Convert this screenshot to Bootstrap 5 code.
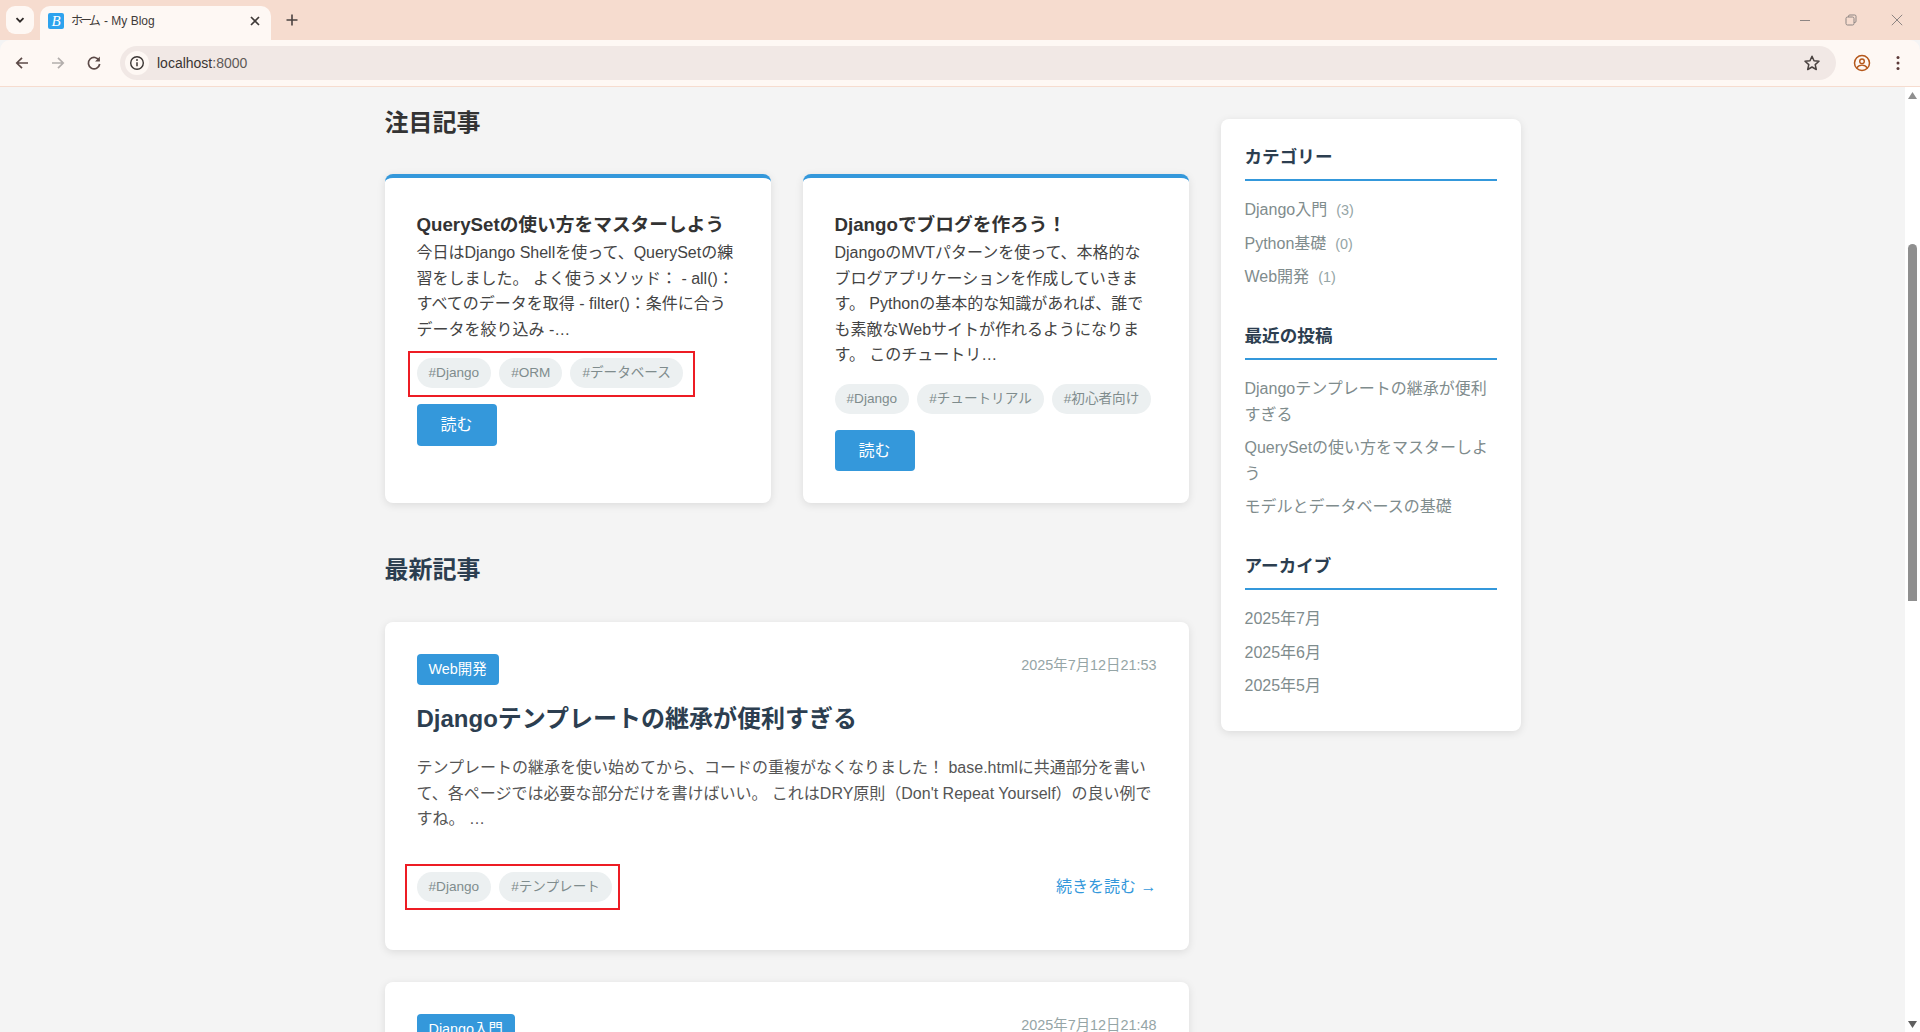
<!DOCTYPE html>
<html lang="ja">
<head>
<meta charset="utf-8">
<title>ホーム - My Blog</title>
<link rel="stylesheet" href="https://cdn.jsdelivr.net/npm/bootstrap@5.3.0/dist/css/bootstrap.min.css">
<style>
html,body{height:100%}
body{font-family:"Liberation Sans","Noto Sans CJK JP",sans-serif;background:#f4f4f4;color:#333;line-height:1.6;font-size:16px}
/* browser chrome */
.tabstrip{height:40px;background:#f6dccf;padding-left:6px}
.tabs-btn{width:28px;height:28px;margin-top:6px;background:#fef8f4;border-radius:9px}
.tab-active{width:231px;height:34px;margin:6px 0 0 6px;background:#fef8f4;border-radius:10px 10px 0 0;padding:0 10px 4px 8px;font-size:12px;color:#3f3a38;line-height:1}
.tab-kana{letter-spacing:-3px;margin-right:3px}
.favi{width:16px;height:16px;background:#2ea3ee;border-radius:2px;color:#fff;font:italic 400 15px/16px "Liberation Serif",serif;text-align:center;margin-right:7px;flex:none}
.tab-new{margin:8px 0 0 9px;width:24px;height:24px}
.winbtns{margin-left:auto}
.winbtn{width:46px;height:40px}
.toolbar{height:47px;background:#fef8f4;border-bottom:1px solid #f6dccf;border-radius:10px 10px 0 0;padding:0 0 1px 0}
.navic{width:36px;height:36px;flex:none}
.omni{width:1716px;height:34px;margin-left:8px;background:#f1e8e5;border-radius:17px;padding:1px 5px 0;font-size:14px;color:#3a3533}
.omni-info{width:24px;height:24px;background:#fef8f4;border-radius:50%;margin-right:8px;flex:none}
.port{color:#5f5a58}
.star-ic{margin-left:auto;margin-right:10px}
.prof-ic{margin-left:8px}
/* page */
.viewport{height:945px}
.pagearea{min-width:0}
.shell{max-width:1200px;margin:0 auto;padding:16px 32px 0;gap:32px}
.mainc{width:804px;flex:none;padding-top:.6px}
.side-col{width:300px;flex:none;padding-top:16px}
.sect-ttl{font-size:24px;line-height:38.4px;font-weight:700;color:#2c3e50;margin:0 0 32px}
.sect-feat{color:#333}
.feat-row{--bs-gutter-x:2rem;--bs-gutter-y:0;margin-bottom:48px}
.panel{background:#fff;border:0;border-radius:8px;box-shadow:0 2px 8px rgba(0,0,0,.1)}
.feat{border-top:4px solid #3498db;padding:32px;height:100%}
.feat-ttl{font-size:18.72px;line-height:1.6;font-weight:700;color:#333;margin:0}
.feat-txt{margin:0;color:#444}
.tagrow{margin:16px 0;gap:8px;position:relative;width:max-content}
.tagpill{background:#ecf0f1;color:#7f8c8d;font-size:13.6px;line-height:21.76px;padding:4px 12px;border-radius:20px}
.redbox{position:absolute;border:2px solid #ed1c24;pointer-events:none}
.redbox-a{left:-9px;right:-12px;top:-7px;bottom:-9px}
.redbox-b{left:-12px;right:-8px;top:-8px;bottom:-8px}
.readbtn{background:#3498db;border:0;color:#fff;font-size:16px;line-height:25.6px;padding:8px 24px;border-radius:4px}
.post{padding:32px;margin-bottom:32px}
.catbadge{background:#3498db;color:#fff;font-size:14.4px;line-height:23px;padding:4px 12px;border-radius:4px}
.datetxt{font-size:14.4px;line-height:23px;color:#95a5a6}
.post-ttl{font-size:24px;line-height:38.4px;font-weight:700;color:#2c3e50;margin:15px 0 17px}
.post-txt{color:#555;margin:0 0 24px}
.morelink{color:#3498db;text-decoration:none}
.sidepanel{padding:24px}
.wdg{margin-bottom:24px}
.wdg:last-child{margin-bottom:0}
.wdg-ttl{font-size:17.6px;line-height:28.16px;font-weight:700;color:#2c3e50;margin:0 0 16px;padding-bottom:8px;border-bottom:2px solid #3498db}
.wdg-list li{margin-bottom:8px}
.wdg-list a{color:#7f8c8d;text-decoration:none}
.cnt{color:#95a5a6;font-size:14.4px;margin-left:9px}
/* scrollbar */
.sbar{width:15px;flex:none;background:#fff;padding:5px 3px 4px}
.sarrow{width:9px;height:7px;flex:none}
.sthumb{width:9px;height:357px;margin-top:145px;background:#8f8f8f;border-radius:5px 5px 0 0}
</style>
</head>
<body class="d-flex flex-column overflow-hidden">
<header>
  <div class="tabstrip d-flex align-items-start">
    <div class="tabs-btn d-flex align-items-center justify-content-center">
      <svg width="12" height="12" viewBox="0 0 12 12"><path d="M2.5 4.2 6 7.7l3.5-3.5" fill="none" stroke="#2f2a28" stroke-width="1.8"/></svg>
    </div>
    <div class="tab-active d-flex align-items-center">
      <span class="favi">B</span>
      <span class="flex-grow-1"><span class="tab-kana">ホーム</span> - My Blog</span>
      <svg width="12" height="12" viewBox="0 0 12 12"><path d="M2 2l8 8M10 2l-8 8" stroke="#3f3a38" stroke-width="1.7"/></svg>
    </div>
    <div class="tab-new d-flex align-items-center justify-content-center">
      <svg width="14" height="14" viewBox="0 0 14 14"><path d="M7 1.5v11M1.5 7h11" stroke="#4a4240" stroke-width="1.6"/></svg>
    </div>
    <div class="winbtns d-flex">
      <div class="winbtn d-flex align-items-center justify-content-center"><svg width="12" height="12" viewBox="0 0 12 12"><path d="M1 6.5h10" stroke="#8d8583" stroke-width="1"/></svg></div>
      <div class="winbtn d-flex align-items-center justify-content-center"><svg width="12" height="12" viewBox="0 0 12 12"><rect x="1" y="3" width="8" height="8" rx="1.5" fill="none" stroke="#8d8583"/><path d="M3.5 3V2.3A1.3 1.3 0 0 1 4.8 1h4.9A1.3 1.3 0 0 1 11 2.3v4.9A1.3 1.3 0 0 1 9.7 8.5H9" fill="none" stroke="#8d8583"/></svg></div>
      <div class="winbtn d-flex align-items-center justify-content-center"><svg width="12" height="12" viewBox="0 0 12 12"><path d="M.8.8l10.4 10.4M11.2.8.8 11.2" stroke="#8d8583" stroke-width="1"/></svg></div>
    </div>
  </div>
  <div class="toolbar d-flex align-items-center">
    <div class="navic d-flex align-items-center justify-content-center ms-1"><svg width="16" height="16" viewBox="0 0 16 16"><path d="M14 8H3M8 2.8 2.8 8 8 13.2" fill="none" stroke="#5c4a47" stroke-width="1.7"/></svg></div>
    <div class="navic d-flex align-items-center justify-content-center"><svg width="16" height="16" viewBox="0 0 16 16"><path d="M2 8h11M8 2.8 13.2 8 8 13.2" fill="none" stroke="#b3aeac" stroke-width="1.7"/></svg></div>
    <div class="navic d-flex align-items-center justify-content-center"><svg width="16" height="16" viewBox="0 0 16 16"><path d="M13.2 5.6A5.7 5.7 0 1 0 13.7 9" fill="none" stroke="#5c4a47" stroke-width="1.7"/><path d="M13.9 1.6v4.8H9.1z" fill="#5c4a47"/></svg></div>
    <div class="omni d-flex align-items-center">
      <span class="omni-info d-flex align-items-center justify-content-center"><svg width="16" height="16" viewBox="0 0 16 16"><circle cx="8" cy="8" r="6.3" fill="none" stroke="#3a3533" stroke-width="1.4"/><path d="M8 7.2v4" stroke="#3a3533" stroke-width="1.5"/><circle cx="8" cy="5" r=".95" fill="#3a3533"/></svg></span>
      <span>localhost<span class="port">:8000</span></span>
      <svg class="star-ic" width="18" height="18" viewBox="0 0 18 18"><path d="M9 2.2l2 4.6 5 .5-3.8 3.3 1.1 4.9L9 13l-4.3 2.5 1.1-4.9L2 7.3l5-.5z" fill="none" stroke="#4a4240" stroke-width="1.5" stroke-linejoin="round"/></svg>
    </div>
    <div class="navic prof-ic d-flex align-items-center justify-content-center"><svg width="18" height="18" viewBox="0 0 18 18"><circle cx="9" cy="9" r="7.5" fill="none" stroke="#b5571a" stroke-width="1.5"/><circle cx="9" cy="7.3" r="2.3" fill="none" stroke="#b5571a" stroke-width="1.4"/><path d="M3.8 14c1.2-2.2 3-2.9 5.2-2.9s4 .7 5.2 2.9" fill="none" stroke="#b5571a" stroke-width="1.4"/></svg></div>
    <div class="navic d-flex align-items-center justify-content-center"><svg width="16" height="16" viewBox="0 0 16 16"><circle cx="8" cy="2.6" r="1.5" fill="#5c3a38"/><circle cx="8" cy="8" r="1.5" fill="#5c3a38"/><circle cx="8" cy="13.4" r="1.5" fill="#5c3a38"/></svg></div>
  </div>
</header>
<div class="viewport d-flex">
  <div class="pagearea flex-grow-1 overflow-hidden">
    <div class="shell d-flex align-items-start">
      <main class="mainc">
        <h2 class="sect-ttl sect-feat">注目記事</h2>
        <div class="row feat-row">
          <div class="col-6">
            <div class="card panel feat">
              <h3 class="feat-ttl">QuerySetの使い方をマスターしよう</h3>
              <p class="feat-txt">今日はDjango Shellを使って、QuerySetの練習をしました。 よく使うメソッド： - all()：すべてのデータを取得 - filter()：条件に合うデータを絞り込み -…</p>
              <div class="tagrow d-flex">
                <span class="tagpill">#Django</span><span class="tagpill">#ORM</span><span class="tagpill">#データベース</span>
                <span class="redbox redbox-a"></span>
              </div>
              <div><a class="btn readbtn" href="#">読む</a></div>
            </div>
          </div>
          <div class="col-6">
            <div class="card panel feat">
              <h3 class="feat-ttl">Djangoでブログを作ろう！</h3>
              <p class="feat-txt">DjangoのMVTパターンを使って、本格的なブログアプリケーションを作成していきます。 Pythonの基本的な知識があれば、誰でも素敵なWebサイトが作れるようになります。 このチュートリ…</p>
              <div class="tagrow d-flex">
                <span class="tagpill">#Django</span><span class="tagpill">#チュートリアル</span><span class="tagpill">#初心者向け</span>
              </div>
              <div><a class="btn readbtn" href="#">読む</a></div>
            </div>
          </div>
        </div>
        <h2 class="sect-ttl">最新記事</h2>
        <article class="card panel post">
          <div class="d-flex justify-content-between align-items-start">
            <span class="catbadge">Web開発</span>
            <span class="datetxt">2025年7月12日21:53</span>
          </div>
          <h3 class="post-ttl">Djangoテンプレートの継承が便利すぎる</h3>
          <p class="post-txt">テンプレートの継承を使い始めてから、コードの重複がなくなりました！ base.htmlに共通部分を書いて、各ページでは必要な部分だけを書けばいい。 これはDRY原則（Don't Repeat Yourself）の良い例ですね。 …</p>
          <div class="d-flex justify-content-between align-items-center">
            <div class="tagrow d-flex">
              <span class="tagpill">#Django</span><span class="tagpill">#テンプレート</span>
              <span class="redbox redbox-b"></span>
            </div>
            <a class="morelink" href="#">続きを読む →</a>
          </div>
        </article>
        <article class="card panel post">
          <div class="d-flex justify-content-between align-items-start">
            <span class="catbadge">Django入門</span>
            <span class="datetxt">2025年7月12日21:48</span>
          </div>
        </article>
      </main>
      <div class="side-col">
        <aside class="card panel sidepanel">
          <section class="wdg">
            <h4 class="wdg-ttl">カテゴリー</h4>
            <ul class="wdg-list list-unstyled m-0">
              <li><a href="#">Django入門</a><span class="cnt">(3)</span></li>
              <li><a href="#">Python基礎</a><span class="cnt">(0)</span></li>
              <li><a href="#">Web開発</a><span class="cnt">(1)</span></li>
            </ul>
          </section>
          <section class="wdg">
            <h4 class="wdg-ttl">最近の投稿</h4>
            <ul class="wdg-list list-unstyled m-0">
              <li><a href="#">Djangoテンプレートの継承が便利すぎる</a></li>
              <li><a href="#">QuerySetの使い方をマスターしよう</a></li>
              <li><a href="#">モデルとデータベースの基礎</a></li>
            </ul>
          </section>
          <section class="wdg">
            <h4 class="wdg-ttl">アーカイブ</h4>
            <ul class="wdg-list list-unstyled m-0">
              <li><a href="#">2025年7月</a></li>
              <li><a href="#">2025年6月</a></li>
              <li><a href="#">2025年5月</a></li>
            </ul>
          </section>
        </aside>
      </div>
    </div>
  </div>
  <div class="sbar d-flex flex-column">
    <svg class="sarrow" viewBox="0 0 9 7"><path d="M4.5 0 9 7H0z" fill="#8f8f8f"/></svg>
    <div class="sthumb"></div>
    <svg class="sarrow mt-auto" viewBox="0 0 9 7"><path d="M0 0h9L4.5 7z" fill="#5f5f5f"/></svg>
  </div>
</div>
<script src="https://cdn.jsdelivr.net/npm/bootstrap@5.3.0/dist/js/bootstrap.bundle.min.js"></script>
</body>
</html>
